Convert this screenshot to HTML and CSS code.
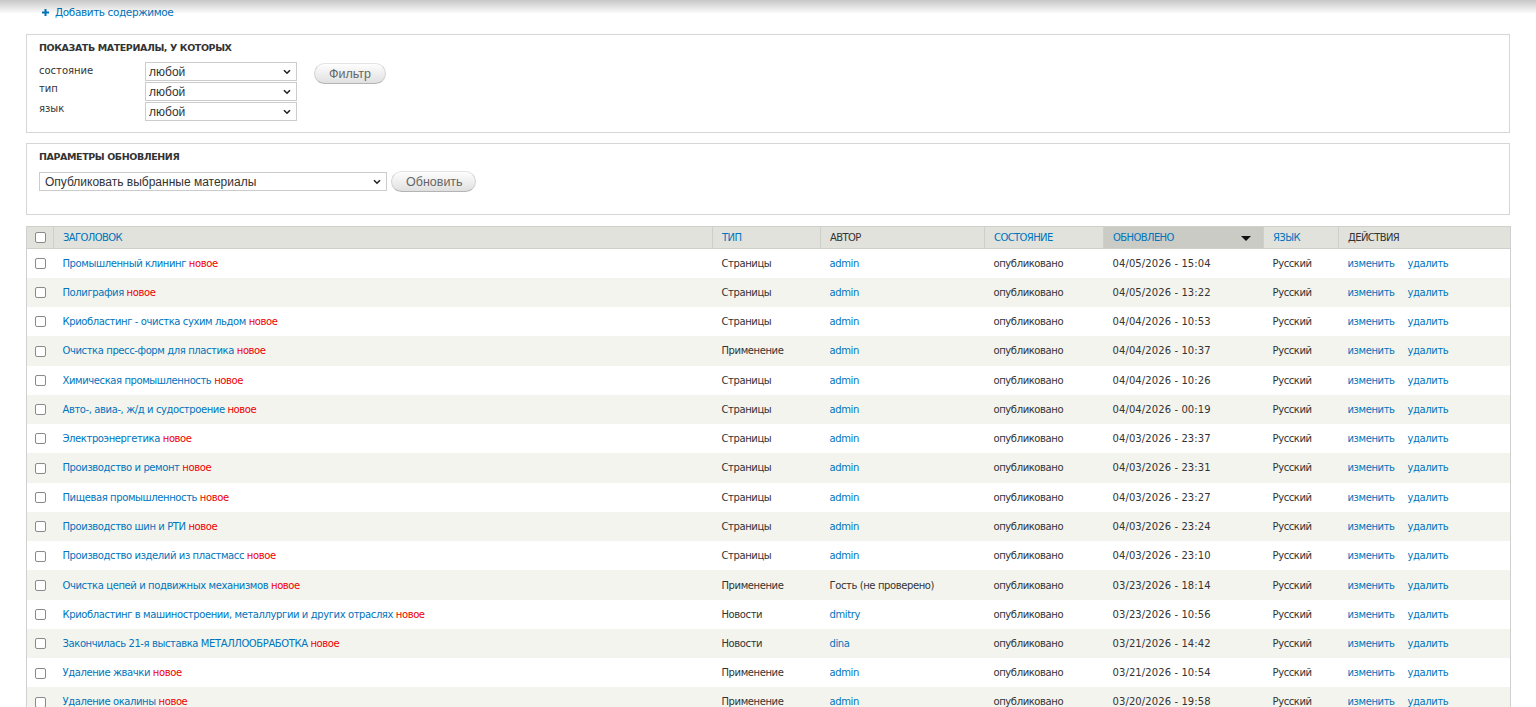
FILE: index.html
```html
<!DOCTYPE html>
<html lang="ru">
<head>
    <meta charset="UTF-8">
    <meta name="viewport" content="width=device-width, initial-scale=1">
    <title>Содержимое</title>
    <link rel="stylesheet" href="styles.css">
</head>
<body>

<div class="page">
    <ul class="action-links">
        <li>
            <a href="#">
                <svg class="plus" width="7" height="7" viewBox="0 0 7 7"><path d="M2.5 0h2v2.5H7v2H4.5V7h-2V4.5H0v-2h2.5z" fill="#0074bd"/></svg>
                Добавить содержимое
            </a>
        </li>
    </ul>

    <div class="box box-filter">
        <div class="box-title">Показать материалы, у которых</div>
        <div class="filter-row">
            <div class="filter-fields">
                <div class="field">
                    <label>состояние</label>
                    <span class="select-wrap w-filter">
                        <select><option>любой</option></select>
                        <svg class="chev" width="8" height="6" viewBox="0 0 8 6"><path d="M1 1.2l3 3 3-3" fill="none" stroke="#222" stroke-width="1.6"/></svg>
                    </span>
                </div>
                <div class="field">
                    <label>тип</label>
                    <span class="select-wrap w-filter">
                        <select><option>любой</option></select>
                        <svg class="chev" width="8" height="6" viewBox="0 0 8 6"><path d="M1 1.2l3 3 3-3" fill="none" stroke="#222" stroke-width="1.6"/></svg>
                    </span>
                </div>
                <div class="field">
                    <label>язык</label>
                    <span class="select-wrap w-filter">
                        <select><option>любой</option></select>
                        <svg class="chev" width="8" height="6" viewBox="0 0 8 6"><path d="M1 1.2l3 3 3-3" fill="none" stroke="#222" stroke-width="1.6"/></svg>
                    </span>
                </div>
            </div>
            <button class="btn btn-filter">Фильтр</button>
        </div>
    </div>

    <div class="box box-update">
        <div class="box-title">Параметры обновления</div>
        <div class="update-row">
            <span class="select-wrap w-update">
                <select><option>Опубликовать выбранные материалы</option></select>
                <svg class="chev" width="8" height="6" viewBox="0 0 8 6"><path d="M1 1.2l3 3 3-3" fill="none" stroke="#222" stroke-width="1.6"/></svg>
            </span>
            <button class="btn btn-update">Обновить</button>
        </div>
    </div>

    <table class="content">
        <colgroup>
            <col style="width:27px">
            <col style="width:659px">
            <col style="width:108px">
            <col style="width:164px">
            <col style="width:119px">
            <col style="width:160px">
            <col style="width:75px">
            <col style="width:172px">
        </colgroup>
        <thead>
            <tr>
                <th class="check"><span class="cb"></span></th>
                <th><a href="#">Заголовок</a></th>
                <th><a href="#">Тип</a></th>
                <th>Автор</th>
                <th><a href="#">Состояние</a></th>
                <th class="active"><a href="#">Обновлено</a><span class="arrow"></span></th>
                <th><a href="#">Язык</a></th>
                <th>Действия</th>
            </tr>
        </thead>
        <tbody id="rows"></tbody>
    </table>
</div>

<script>
const rows = [
    ["Промышленный клининг", "Страницы", "admin", "04/05/2026 - 15:04"],
    ["Полиграфия", "Страницы", "admin", "04/05/2026 - 13:22"],
    ["Криобластинг - очистка сухим льдом", "Страницы", "admin", "04/04/2026 - 10:53"],
    ["Очистка пресс-форм для пластика", "Применение", "admin", "04/04/2026 - 10:37"],
    ["Химическая промышленность", "Страницы", "admin", "04/04/2026 - 10:26"],
    ["Авто-, авиа-, ж/д и судостроение", "Страницы", "admin", "04/04/2026 - 00:19"],
    ["Электроэнергетика", "Страницы", "admin", "04/03/2026 - 23:37"],
    ["Производство и ремонт", "Страницы", "admin", "04/03/2026 - 23:31"],
    ["Пищевая промышленность", "Страницы", "admin", "04/03/2026 - 23:27"],
    ["Производство шин и РТИ", "Страницы", "admin", "04/03/2026 - 23:24"],
    ["Производство изделий из пластмасс", "Страницы", "admin", "04/03/2026 - 23:10"],
    ["Очистка цепей и подвижных механизмов", "Применение", "", "03/23/2026 - 18:14"],
    ["Криобластинг в машиностроении, металлургии и других отраслях", "Новости", "dmitry", "03/23/2026 - 10:56"],
    ["Закончилась 21-я выставка МЕТАЛЛООБРАБОТКА", "Новости", "dina", "03/21/2026 - 14:42"],
    ["Удаление жвачки", "Применение", "admin", "03/21/2026 - 10:54"],
    ["Удаление окалины", "Применение", "admin", "03/20/2026 - 19:58"]
];

const tbody = document.getElementById('rows');
rows.forEach((r, i) => {
    const tr = document.createElement('tr');
    tr.className = i % 2 ? 'even' : 'odd';
    const author = r[2] ? `<a href="#">${r[2]}</a>` : 'Гость (не проверено)';
    tr.innerHTML = `
        <td class="check"><span class="cb"></span></td>
        <td><a href="#">${r[0]}</a> <span class="marker">новое</span></td>
        <td>${r[1]}</td>
        <td>${author}</td>
        <td>опубликовано</td>
        <td class="date">${r[3]}</td>
        <td>Русский</td>
        <td class="ops"><a href="#">изменить</a><a href="#">удалить</a></td>`;
    tbody.appendChild(tr);
});
</script>

</body>
</html>
```

FILE: styles.css
```css
body {
    margin: 0;
    background: #fff;
    color: #333;
    font-family: "DejaVu Sans", Verdana, sans-serif;
    font-size: 10px;
}
body::before {
    content: "";
    position: absolute;
    top: 0;
    left: 0;
    right: 0;
    height: 14px;
    background: linear-gradient(rgba(0,0,0,0.22), rgba(0,0,0,0));
    pointer-events: none;
}
a {
    color: #0074bd;
    text-decoration: none;
}
.page {
    padding: 0 26px;
}
.action-links {
    list-style: none;
    margin: 0;
    padding: 5px 0 0 16px;
    height: 34px;
    box-sizing: border-box;
}
.action-links a {
    display: inline-flex;
    align-items: center;
    gap: 6px;
    font-size: 10.5px;
    letter-spacing: -0.4px;
    line-height: 14px;
}
.box {
    border: 1px solid #d6d6d6;
    padding: 6px 12px 11px;
    margin-bottom: 10px;
}
.box-update {
    padding-bottom: 22px;
    margin-bottom: 11px;
}
.box-title {
    font-weight: bold;
    font-size: 9.5px;
    letter-spacing: -0.4px;
    text-transform: uppercase;
    line-height: 13px;
    margin-bottom: 8px;
}
.filter-row {
    display: flex;
    align-items: flex-start;
    gap: 17px;
}
.filter-fields {
    display: flex;
    flex-direction: column;
    gap: 1px;
}
.field {
    display: flex;
    align-items: flex-start;
}
.field label {
    width: 106px;
    line-height: 14px;
}
.field:first-child label {
    padding-top: 2px;
}
.select-wrap {
    position: relative;
    display: inline-block;
}
.select-wrap select {
    appearance: none;
    -webkit-appearance: none;
    display: block;
    width: 100%;
    margin: 0;
    border: 1px solid #ccc;
    border-radius: 0;
    background: #fff;
    color: #333;
    font-family: "Liberation Sans", Arial, sans-serif;
    font-size: 12px;
    padding: 0 3px;
    box-sizing: border-box;
}
.select-wrap .chev {
    position: absolute;
    right: 6px;
    top: 7px;
}
.w-filter {
    width: 152px;
}
.w-filter select {
    height: 19px;
}
.w-update {
    width: 348px;
}
.w-update select {
    height: 19px;
    padding-left: 5px;
}
.btn {
    font-family: "Liberation Sans", Arial, sans-serif;
    font-size: 12.5px;
    color: #666;
    border: 1px solid #e4e4e4;
    border-bottom-color: #b4b4b4;
    border-left-color: #d2d2d2;
    border-right-color: #d2d2d2;
    border-radius: 12px;
    background: linear-gradient(#fefefe, #e0e0e0);
    height: 21px;
    padding: 0 14px;
    margin: 0;
}
.btn-filter {
    width: 72px;
    margin-top: 1px;
}
.update-row {
    display: flex;
    align-items: center;
    gap: 4px;
}
.btn-update {
    width: 85px;
}
table.content {
    width: 1484px;
    table-layout: fixed;
    border-collapse: collapse;
    border: 1px solid #d0d0d0;
}
table.content th {
    background: #e1e2dc;
    text-align: left;
    text-transform: uppercase;
    font-weight: normal;
    letter-spacing: -0.6px;
    height: 22px;
    padding: 0 9px;
    border-top: 1px solid #cfd0ca;
    border-bottom: 1px solid #cfd0ca;
    border-left: 1px solid #cececa;
    box-sizing: border-box;
    color: #333;
}
table.content th:first-child {
    border-left: none;
}
table.content th.active {
    background: #cbcbc6;
    position: relative;
}
.arrow {
    position: absolute;
    right: 12px;
    top: 9px;
    border-left: 5px solid transparent;
    border-right: 5px solid transparent;
    border-top: 5px solid #111;
}
table.content td {
    height: 29.27px;
    padding: 0 9px;
    box-sizing: border-box;
    white-space: nowrap;
    letter-spacing: -0.4px;
}
table.content td.date {
    letter-spacing: 0.1px;
}
tr.even td {
    background: #f3f4ee;
}
table.content th.check,
table.content td.check {
    padding: 0;
    text-align: center;
}
.cb {
    display: inline-block;
    width: 9px;
    height: 9px;
    border: 1px solid #8a8a8a;
    border-radius: 2px;
    background: #fff;
    vertical-align: middle;
}
.marker {
    color: #e00;
}
.ops a {
    margin-right: 13px;
}
```
